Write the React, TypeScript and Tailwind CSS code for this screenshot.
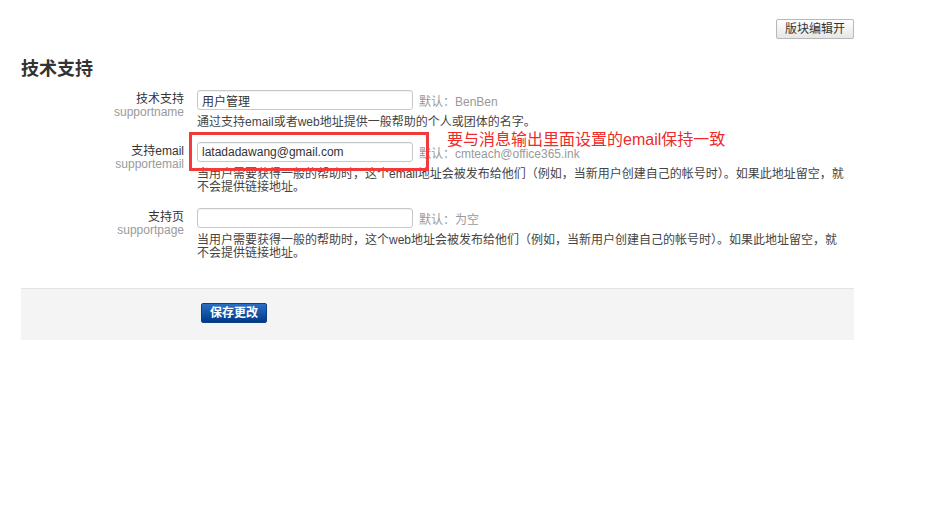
import React from "react";

const font = { fontFamily: '"Liberation Sans", Arial, "Noto Sans CJK SC", sans-serif' };

const FIELDS = [
  {
    label: "技术支持",
    key: "supportname",
    value: "用户管理",
    def: "默认：BenBen",
    help: ["通过支持email或者web地址提供一般帮助的个人或团体的名字。"],
    mt: "mt-0",
  },
  {
    label: "支持email",
    key: "supportemail",
    value: "latadadawang@gmail.com",
    def: "默认：cmteach@office365.ink",
    help: [
      "当用户需要获得一般的帮助时，这个email地址会被发布给他们（例如，当新用户创建自己的帐号时）。如果此地址留空，就",
      "不会提供链接地址。",
    ],
    mt: "mt-[13px]",
  },
  {
    label: "支持页",
    key: "supportpage",
    value: "",
    def: "默认：为空",
    help: [
      "当用户需要获得一般的帮助时，这个web地址会被发布给他们（例如，当新用户创建自己的帐号时）。如果此地址留空，就",
      "不会提供链接地址。",
    ],
    mt: "mt-[14px]",
  },
];

function FieldRow({ f }: { f: (typeof FIELDS)[number] }) {
  return (
    <div className={`flex ${f.mt}`}>
      <div className="w-[163px] shrink-0 pt-[3px] text-right text-[12px] leading-[13px]">
        <div className="text-[#333]">{f.label}</div>
        <div className="text-[#9a9a9a]">{f.key}</div>
      </div>
      <div className="ml-[13px] flex-1">
        <div className="flex items-center">
          <input
            defaultValue={f.value}
            className="h-[20px] w-[216px] rounded-[3px] border border-[#c8c8c8] px-[4px] text-[12px] text-[#333] shadow-[inset_0_1px_1px_rgba(0,0,0,0.06)] outline-none"
            style={font}
          />
          <span className="ml-[6px] mt-[4px] text-[12px] leading-[12px] text-[#999]">{f.def}</span>
        </div>
        <div className="mt-[6px] text-[12px] leading-[13px] text-[#444]">
          {f.help.map((h, i) => (
            <div key={i}>{h}</div>
          ))}
        </div>
      </div>
    </div>
  );
}

export default function App() {
  return (
    <div className="relative min-h-[522px] w-[946px] bg-white" style={font}>
      <div className="ml-[21px] w-[833px]">
        <div className="flex justify-end pt-[19px]">
          <button className="h-[20px] rounded-[2px] border border-[#b8b8b8] bg-gradient-to-b from-white to-[#e6e6e6] px-[8px] text-[12px] leading-[18px] text-[#333]">
            版块编辑开
          </button>
        </div>
        <h2 className="mt-[18px] text-[18px] font-bold leading-[24px] text-[#333]">技术支持</h2>

        <div className="mt-[9px]">
          {FIELDS.map(f => (
            <FieldRow key={f.key} f={f} />
          ))}
        </div>

        <div className="mt-[28px] h-[52px] border-t border-[#e3e3e3] bg-[#f4f4f4] pl-[180px] pt-[11px]">
          <button className="h-[20px] rounded-[2px] border border-[#0d3f86] bg-gradient-to-b from-[#2b6fc4] to-[#003a8a] px-[8px] text-[12px] font-bold leading-[18px] text-white">
            保存更改
          </button>
        </div>
      </div>

      {/* 标注 */}
      <div className="pointer-events-none absolute left-[189px] top-[132px] h-[39px] w-[240px] border-[3px] border-[#f23a3a]" />
      <div className="absolute left-[447px] top-[131px] text-[16px] leading-[17px] text-[#f02a2a]">
        要与消息输出里面设置的email保持一致
      </div>
    </div>
  );
}
